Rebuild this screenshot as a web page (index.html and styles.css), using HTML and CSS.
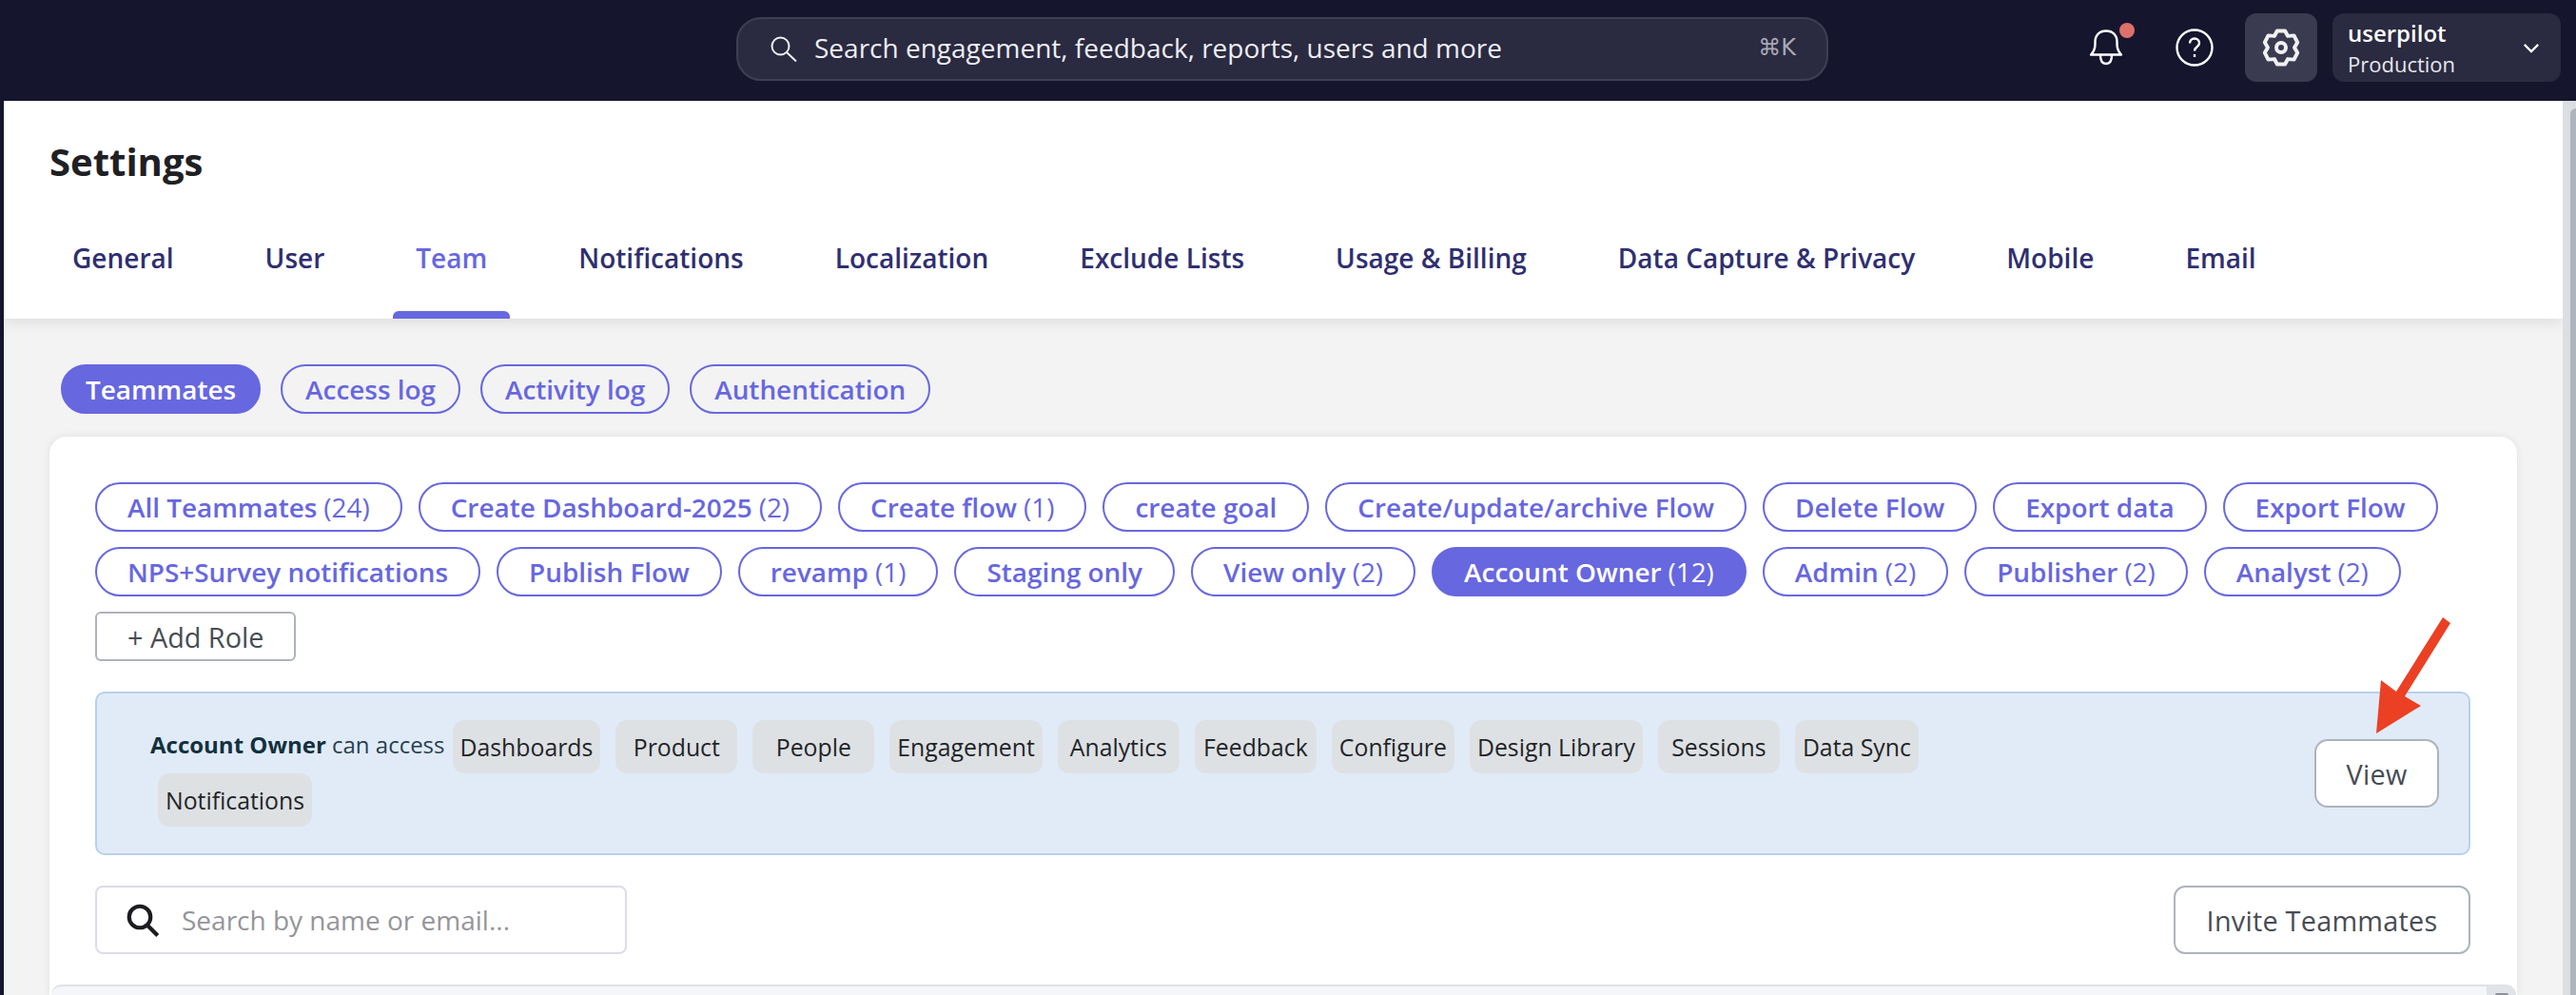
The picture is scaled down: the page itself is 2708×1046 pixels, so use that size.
FILE: index.html
```html
<!DOCTYPE html>
<html lang="en">
<head>
<meta charset="utf-8">
<title>Settings</title>
<link rel="stylesheet" href="styles.css">
</head>
<body>
<header class="topbar">
  <div class="global-search">
    <svg class="gs-icon" viewBox="0 0 28 30" width="28" height="30"><circle cx="10.500" cy="13.500" r="9"/><path d="M17 20l10 9.500"/></svg>
    <span class="gs-text">Search engagement, feedback, reports, users and more</span>
    <span class="gs-key">⌘K</span>
  </div>
  <div class="top-actions">
    <div class="icon-btn bell">
      <svg viewBox="0 0 40 40" width="40" height="40"><path d="M4 27.500c3-3 4.500-6 4.500-11V14C8.500 7 13 2.500 20 2.500S31.500 7 31.500 14v2.500c0 5 1.500 8 4.500 11z"/><path d="M14 28c0 6 2.500 9 6 9s6-3 6-9"/></svg>
      <span class="dot"></span>
    </div>
    <div class="icon-btn help">
      <svg viewBox="0 0 40 40" width="40" height="40"><circle cx="20" cy="20" r="18.500"/><path d="M15 15.500c0-3 2.200-5 5-5s5 2 5 4.800c0 4-5 4-5 8.200"/><path d="M20 27v3"/></svg>
    </div>
    <div class="gear-btn">
      <svg viewBox="0 0 40 40" width="40" height="40"><path d="M15.840 2.500H24.160L27 7.880 33.530 7.380 37.200 14.590 34 20 37.200 25.410 33.530 32.620 27 32.120 24.160 37.500H15.840L13 32.120 6.470 32.620 2.800 25.410 6 20 2.800 14.590 6.470 7.380 13 7.880z"/><circle cx="20" cy="20" r="5"/></svg>
    </div>
    <div class="account">
      <div class="account-text">
        <span class="account-name">userpilot</span>
        <span class="account-env">Production</span>
      </div>
      <svg class="chev" viewBox="0 0 20 12" width="18" height="11"><path d="M2 2l8 8 8-8"/></svg>
    </div>
  </div>
</header>

<div class="frame">
  <main class="page">
    <section class="head">
      <h1 class="title">Settings</h1>
      <nav class="tabs">
        <a class="tab">General</a>
        <a class="tab">User</a>
        <a class="tab active">Team</a>
        <a class="tab">Notifications</a>
        <a class="tab">Localization</a>
        <a class="tab">Exclude Lists</a>
        <a class="tab">Usage &amp; Billing</a>
        <a class="tab">Data Capture &amp; Privacy</a>
        <a class="tab">Mobile</a>
        <a class="tab">Email</a>
      </nav>
    </section>

    <section class="body">
      <div class="subtabs">
        <span class="pill on">Teammates</span>
        <span class="pill">Access log</span>
        <span class="pill">Activity log</span>
        <span class="pill">Authentication</span>
      </div>

      <div class="card">
        <div class="roles">
          <span class="pill role">All Teammates <i>(24)</i></span>
          <span class="pill role">Create Dashboard-2025 <i>(2)</i></span>
          <span class="pill role">Create flow <i>(1)</i></span>
          <span class="pill role">create goal</span>
          <span class="pill role">Create/update/archive Flow</span>
          <span class="pill role">Delete Flow</span>
          <span class="pill role">Export data</span>
          <span class="pill role">Export Flow</span>
          <span class="pill role">NPS+Survey notifications</span>
          <span class="pill role">Publish Flow</span>
          <span class="pill role">revamp <i>(1)</i></span>
          <span class="pill role">Staging only</span>
          <span class="pill role">View only <i>(2)</i></span>
          <span class="pill role on">Account Owner <i>(12)</i></span>
          <span class="pill role">Admin <i>(2)</i></span>
          <span class="pill role">Publisher <i>(2)</i></span>
          <span class="pill role">Analyst <i>(2)</i></span>
          <span class="add-role">+ Add Role</span>
        </div>

        <div class="banner">
          <div class="access">
            <span class="access-label"><b>Account Owner</b> can access</span>
            <span class="chip">Dashboards</span>
            <span class="chip">Product</span>
            <span class="chip">People</span>
            <span class="chip">Engagement</span>
            <span class="chip">Analytics</span>
            <span class="chip">Feedback</span>
            <span class="chip">Configure</span>
            <span class="chip">Design Library</span>
            <span class="chip">Sessions</span>
            <span class="chip">Data Sync</span>
            <span class="chip">Notifications</span>
          </div>
          <span class="btn view">View</span>
          <svg class="arrow" viewBox="0 0 90 130" width="90" height="130"><path d="M78 4L86 10 38 87 55 97 8 126 13 70 29 82z"/></svg>
        </div>

        <div class="tools">
          <div class="user-search">
            <svg viewBox="0 0 24 24" width="36" height="36"><circle cx="10" cy="10" r="7.500"/><path d="M15 15.500l7.500 7.500"/></svg>
            <span>Search by name or email...</span>
          </div>
          <span class="btn invite">Invite Teammates</span>
        </div>

        <div class="table-top"><span class="table-scroll"><span class="table-thumb"></span></span></div>
      </div>
    </section>
  </main>
  <div class="scrollbar"><span class="thumb"></span></div>
</div>
</body>
</html>
```
FILE: styles.css
```css
* { box-sizing: border-box; }
html, body { margin: 0; height: 1046px; overflow: hidden; }
body { background: #15152e; font-family: "Open Sans", "Noto Sans", sans-serif; color: #1f2024; }

.topbar { height: 106px; position: relative; display: flex; align-items: center; justify-content: flex-end; padding: 0 16px 6px 0; }
.global-search { position: absolute; left: 774px; top: 18px; width: 1148px; height: 67px; border-radius: 26px; border: 2px solid #3f3f54; background: #2a2a41; display: flex; align-items: center; padding: 0 32px 3px 34px; color: #eeeef2; }
.gs-icon { fill: none; stroke: #f2f2f6; stroke-width: 2; margin-right: 18px; flex: none; }
.gs-text { font-size: 28px; flex: 1; white-space: nowrap; }
.gs-key { font-size: 24px; color: #a8a8b4; font-family: "DejaVu Sans", sans-serif; }

.top-actions { display: flex; align-items: center; }
.icon-btn { position: relative; width: 40px; height: 40px; }
.icon-btn svg { display: block; fill: none; stroke: #fff; stroke-width: 2.400; stroke-linejoin: round; }
.bell { margin-right: 53px; }
.help { margin-right: 33px; }
.dot { position: absolute; top: -6px; right: -10px; width: 16px; height: 16px; border-radius: 50%; background: #dd706a; }
.gear-btn { width: 76px; height: 72px; border-radius: 12px; background: #3a3a51; display: flex; align-items: center; justify-content: center; margin-right: 16px; }
.gear-btn svg { fill: none; stroke: #f0f0f2; stroke-width: 4; stroke-linejoin: round; }
.account { width: 240px; height: 72px; border-radius: 12px; background: #2a2a41; padding: 1px 22px 0 16px; display: flex; align-items: center; justify-content: space-between; color: #fff; }
.account-text { display: flex; flex-direction: column; }
.account-name { font-size: 24px; font-weight: 600; line-height: 33px; }
.account-env { font-size: 22px; line-height: 33px; color: #e6e6ea; }
.chev { fill: none; stroke: #fff; stroke-width: 2.500; margin-top: -1px; }

.frame { display: flex; height: 940px; }
.page { flex: 1; min-width: 0; margin-left: 4px; background: #f3f3f3; overflow: hidden; }
.scrollbar { width: 14px; background: #dbdfe3; padding: 8px 0 0 8px; }
.thumb { display: block; height: 100%; background: #b0b5bd; border-radius: 8px 0 0 0; }

.head { height: 229px; background: #fff; box-shadow: 0 4px 14px rgba(0,0,0,.09); position: relative; padding-left: 48px; display: flex; flex-direction: column; }
.title { margin: 40px 0 0; font-size: 40px; line-height: 48px; font-weight: 700; color: #1f2024; }
.tabs { margin-top: auto; display: flex; gap: 48px; }
.tab { position: relative; display: block; height: 107px; padding: 24px 24px 0; font-size: 28.030px; line-height: 38px; font-weight: 600; color: #2f2f70; white-space: nowrap; }
.tab.active { color: #6767e0; }
.tab.active::after { content: ""; position: absolute; left: 0; right: 0; bottom: 0; height: 8px; border-radius: 6px 6px 0 0; background: #6767e0; }

.body { padding: 48px 48px 0; }
.subtabs { display: flex; gap: 21px; padding-left: 12px; }
.pill { display: inline-flex; align-items: center; height: 52px; padding: 0 24px; border: 2px solid #6767e0; border-radius: 26px; font-size: 27.900px; font-weight: 600; color: #6767e0; white-space: nowrap; }
.pill.on { background: #6767e0; color: #fff; }
.pill i { font-style: normal; font-weight: 400; margin-left: 7px; }

.card { margin-top: 24px; height: 587px; background: #fff; border-radius: 18px 18px 0 0; box-shadow: 0 0 8px rgba(0,0,0,.08); padding: 48px 49px 0 48px; }
.roles { display: flex; flex-wrap: wrap; gap: 16px 17px; }
.role { padding: 0 32px; }
.add-role { display: inline-flex; align-items: center; height: 52px; padding: 0 32px; border: 2px solid #adb3bc; border-radius: 6px; font-size: 28.800px; font-weight: 500; color: #474c54; }

.banner { position: relative; margin-top: 32px; height: 172px; background: #e1ebf8; border: 2px solid #b8d0ec; border-radius: 10px; padding: 28px 31px 0 56px; display: flex; justify-content: space-between; }
.access { width: 1900px; display: flex; flex-wrap: wrap; align-items: flex-start; align-content: flex-start; }
.access-label { height: 56px; line-height: 52px; font-size: 24px; color: #28404f; }
.access-label b { font-weight: 700; color: #13303f; }
.chip { height: 56px; min-width: 128px; margin: 0 8px; padding: 0 8px; background: #dee1e3; border-radius: 12px; display: flex; align-items: center; justify-content: center; font-size: 24.800px; font-weight: 500; color: #22252a; }
.btn { display: inline-flex; align-items: center; justify-content: center; background: #fff; border: 2px solid #adb3bc; border-radius: 14px; font-size: 28.800px; letter-spacing: .25px; font-weight: 500; color: #474c54; }
.view { width: 131px; height: 72px; margin-top: 20px; }
.arrow { position: absolute; right: 15px; top: -84px; fill: #eb4023; }

.tools { margin-top: 32px; display: flex; justify-content: space-between; }
.user-search { width: 559px; height: 72px; border: 2px solid #dcdcec; border-radius: 8px; display: flex; align-items: center; padding-left: 30px; gap: 23px; font-size: 28px; color: #959599; }
.user-search svg { fill: none; stroke: #1c1c20; stroke-width: 2.800; flex: none; }
.invite { width: 312px; height: 72px; border-radius: 12px; }

.table-top { margin: 32px -48px 0 -46px; height: 11px; border-top: 2px solid #dfe1e6; border-radius: 16px 16px 0 0; background: #f5f6fa; position: relative; overflow: hidden; }
.table-scroll { position: absolute; right: 0; top: 0; bottom: 0; width: 31px; background: #e0e3e7; display: flex; justify-content: center; align-items: flex-end; }
.table-thumb { width: 14px; height: 2px; border-radius: 4px 4px 0 0; background: #8e9298; }
```
